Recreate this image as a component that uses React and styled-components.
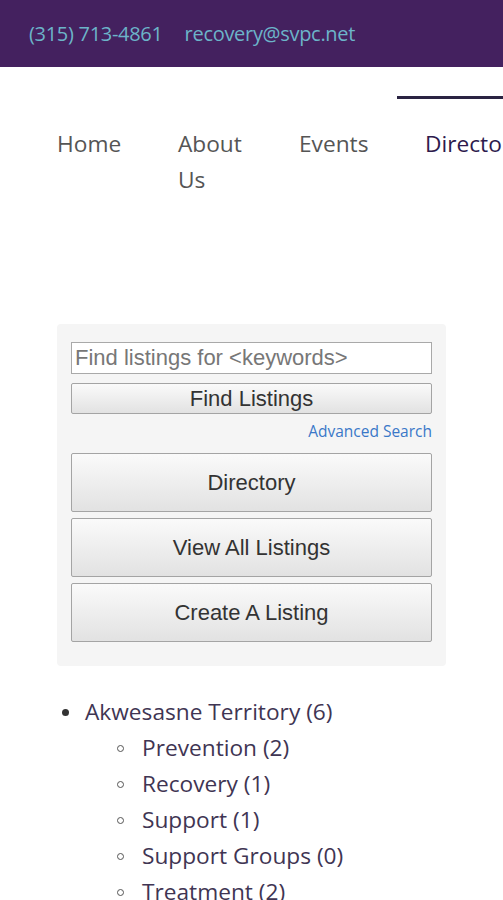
import React from 'react';
import styled, { createGlobalStyle } from 'styled-components';

const Global = createGlobalStyle`
  html, body {
    margin: 0;
    padding: 0;
    background: #ffffff;
    overflow-x: hidden;
  }
  body {
    width: 503px;
    font-family: 'Open Sans', 'Noto Sans', sans-serif;
  }
`

const TopBar = styled.div`
  height: 67px;
  background-color: #44215f;
  display: flex;
  align-items: center;
  gap: 22px;
  padding-left: 29px;
  box-sizing: border-box;
`
const Contact = styled.span`
  font-family: 'Open Sans', sans-serif;
  font-size: 20px;
  color: #6cb4c9;
  letter-spacing: -0.3px;
`

const Nav = styled.nav`
  display: flex;
  padding-left: 29px;
  margin-top: 29px;
  overflow: hidden;
  white-space: nowrap;
`
const NavItem = styled.div`
  flex-shrink: 0;
  width: ${p => p.w || 121}px;
  box-sizing: border-box;
  padding: 27px 28px 0;
  border-top: 3px solid ${p => (p.active ? '#2a2342' : 'transparent')};
  font-size: 22.7px;
  line-height: 36px;
  white-space: normal;
  color: ${p => (p.active ? '#2d1a4d' : '#555555')};
`

const Main = styled.div`
  padding: 0 57px;
  margin-top: 126px;
`

const Panel = styled.div`
  width: 389px;
  box-sizing: border-box;
  background-color: #f5f5f5;
  border-radius: 4px;
  padding: 18px 14px 24px;
  display: flex;
  flex-direction: column;
`
const SearchInput = styled.input`
  height: 32px;
  box-sizing: border-box;
  border: 1px solid #a9a9a9;
  background: #fff;
  padding: 0 3px;
  font-family: 'Liberation Sans', Arial, sans-serif;
  font-size: 22px;
  color: #333;
  outline: none;
  &::placeholder {
    color: #777;
  }
`
const Button = styled.button`
  height: ${p => p.h}px;
  margin-top: ${p => p.mt}px;
  box-sizing: border-box;
  border: 1px solid #a4a4a4;
  border-radius: 2px;
  background: linear-gradient(#fafafa, #e2e2e2);
  font-family: 'Liberation Sans', Arial, sans-serif;
  font-size: 22px;
  color: #333;
  padding: 0;
  cursor: pointer;
`
const AdvancedLink = styled.a`
  align-self: flex-end;
  margin-top: 8px;
  margin-bottom: 12px;
  font-family: 'Open Sans', sans-serif;
  font-size: 15.5px;
  line-height: 19px;
  color: #3a78c8;
  text-decoration: none;
`

const Tree = styled.ul`
  margin: 28px 0 0;
  padding-left: 28px;
  list-style: none;
  font-size: 22.7px;
  line-height: 36px;
  color: #3f3553;
`
const SubTree = styled.ul`
  margin: 0;
  padding-left: 57px;
  list-style: none;
`
const Item = styled.li`
  &::before {
    content: '';
    display: inline-block;
    box-sizing: border-box;
    width: 7px;
    height: 7px;
    border-radius: 50%;
    background: ${p => (p.sub ? 'transparent' : '#333')};
    border: ${p => (p.sub ? '1.5px solid #555' : 'none')};
    margin-left: ${p => (p.sub ? -25 : -23)}px;
    margin-right: ${p => (p.sub ? 18 : 16)}px;
    vertical-align: middle;
    position: relative;
    top: -1px;
  }
`

const categories = [
  'Prevention (2)',
  'Recovery (1)',
  'Support (1)',
  'Support Groups (0)',
  'Treatment (2)',
]

export default function App() {
  return (
    <>
      <Global />
      <TopBar>
        <Contact>(315) 713-4861</Contact>
        <Contact>recovery@svpc.net</Contact>
      </TopBar>
      <Nav>
        <NavItem>Home</NavItem>
        <NavItem>About Us</NavItem>
        <NavItem w={126}>Events</NavItem>
        <NavItem active w={150}>Directory</NavItem>
        <NavItem>Contact</NavItem>
      </Nav>
      <Main>
        <Panel>
          <SearchInput placeholder="Find listings for <keywords>" />
          <Button h={31} mt={9}>Find Listings</Button>
          <AdvancedLink href="#">Advanced Search</AdvancedLink>
          <Button h={59} mt={0}>Directory</Button>
          <Button h={59} mt={6}>View All Listings</Button>
          <Button h={59} mt={6}>Create A Listing</Button>
        </Panel>
        <Tree>
          <Item>
            Akwesasne Territory (6)
            <SubTree>
              {categories.map(c => (
                <Item sub key={c}>{c}</Item>
              ))}
            </SubTree>
          </Item>
        </Tree>
      </Main>
    </>
  );
}
